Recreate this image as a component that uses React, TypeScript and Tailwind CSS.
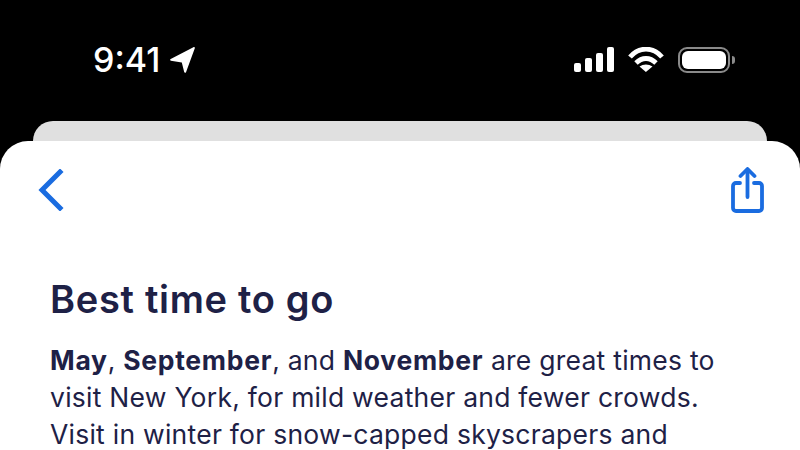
export default function App() {
  return (
    <div className="w-[800px] h-[450px] overflow-hidden bg-black flex flex-col" style={{ fontFamily: '"Inter", "Liberation Sans", sans-serif' }}>
      <div className="h-[121px] shrink-0 flex items-start justify-between pl-[93px] pr-[65px] pt-[41px]">
        <div className="flex items-center gap-[9px] text-white">
          <span className="text-[34px] leading-[38px] font-medium">9:41</span>
          <svg width="26" height="26" viewBox="0 0 26 26"><path d="M25.8 1.2 17 25.2c-.4.9-1.6.8-1.8-.1l-2.4-9.6-10.9-1.7c-1-.2-1.2-1.5-.2-1.9L24.4.2c1-.4 1.8.4 1.4 1z" fill="#fff" /></svg>
        </div>
        <div className="flex items-center pt-[6px]">
          <svg width="41" height="26" viewBox="0 0 41 26" fill="#fff">
            <rect x="0" y="16" width="7" height="9" rx="2" />
            <rect x="11" y="11" width="7" height="14" rx="2" />
            <rect x="22" y="6" width="7" height="19" rx="2" />
            <rect x="33" y="0" width="7" height="25" rx="2" />
          </svg>
          <svg width="36" height="26" viewBox="0 0 36 26" fill="none" stroke="#fff" strokeWidth="4.8" className="ml-[13px]">
            <path d="M2 10C11-.5 25-.5 34 10" />
            <path d="M8 16c6-6 14-6 20 0" />
            <path d="M17.9 25 11.5 19.5c3.8-2.8 9-2.8 13 0z" fill="#fff" stroke="none" />
          </svg>
          <div className="flex items-center gap-[2px] ml-[14px]">
            <div className="w-[52px] h-[26px] rounded-[9px] border-2 border-[#8a8a8a] p-[2px]">
              <div className="w-full h-full rounded-[6px] bg-white" />
            </div>
            <div className="w-[3px] h-[8px] rounded-r-[3px] bg-[#8a8a8a]" />
          </div>
        </div>
      </div>
      <div className="mx-[33px] h-[20px] shrink-0 bg-[#e0e0e0] rounded-t-[20px]" />
      <div className="flex-1 bg-white rounded-t-[28px]">
        <div className="flex items-start justify-between pl-[38px] pr-[36px] pt-[28px]">
          <svg width="26" height="42" viewBox="0 0 26 42" fill="none" stroke="#1a6ce0" strokeWidth="5" strokeLinecap="square">
            <path d="M22 3 4 21l18 18" />
          </svg>
          <svg width="34" height="46" viewBox="0 0 34 46" fill="none" stroke="#1a6ce0" strokeWidth="3.8" strokeLinecap="round" strokeLinejoin="round" className="-mt-[2px]">
            <path d="M10 16H6a3 3 0 0 0-3 3v22a3 3 0 0 0 3 3h23a3 3 0 0 0 3-3V19a3 3 0 0 0-3-3h-5" />
            <path d="M17.5 30V3" />
            <path d="M10.5 9 17.5 2l7 7" />
          </svg>
        </div>
        <div className="px-[50px] pt-[63px] text-[#1e2146]">
          <h1 className="text-[38px] leading-[46px] font-semibold tracking-[0.7px]">Best time to go</h1>
          <p className="mt-[20px] text-[26.5px] leading-[37px] tracking-[0.25px] whitespace-nowrap">
            <b className="tracking-[0.7px]">May</b>, <b className="tracking-[0.7px]">September</b>, and <b className="tracking-[0.7px]">November</b> are great times to<br />
            visit New York, for mild weather and fewer crowds.<br />
            Visit in winter for snow-capped skyscrapers and
          </p>
        </div>
      </div>
    </div>
  );
}
